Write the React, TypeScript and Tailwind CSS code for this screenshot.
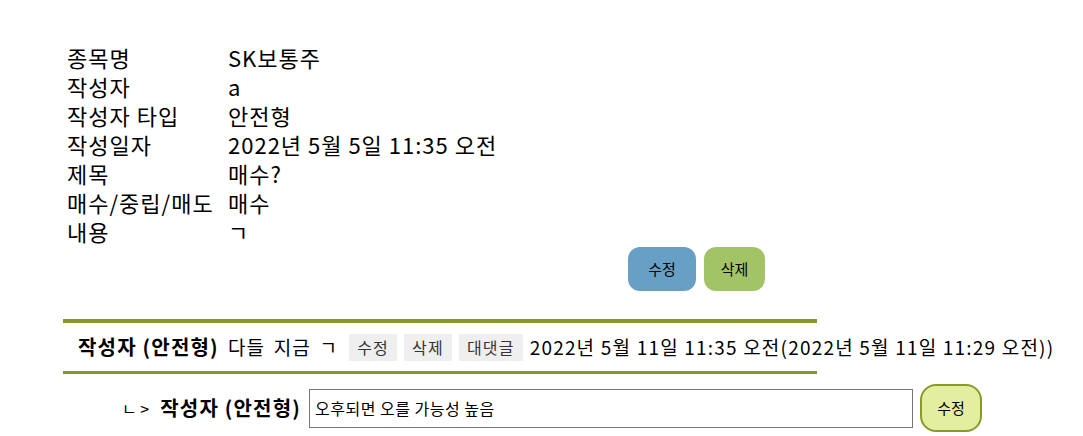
import React from 'react';

const rows: [string, string][] = [
  ['종목명', 'SK보통주'],
  ['작성자', 'a'],
  ['작성자 타입', '안전형'],
  ['작성일자', '2022년 5월 5일 11:35 오전'],
  ['제목', '매수?'],
  ['매수/중립/매도', '매수'],
  ['내용', 'ㄱ'],
];

const App = () => {
  return (
    <div
      className="min-h-[436px] w-[1083px] bg-white text-black"
      style={{ fontFamily: '"Noto Sans CJK KR", "Noto Sans", sans-serif' }}
    >
      {/* 게시글 정보 */}
      <div className="pl-[67px] pt-[43px]">
        <table className="text-[22px] leading-[29px] tracking-[1px]">
          <tbody>
            {rows.map(([label, value]) => (
              <tr key={label}>
                <td className="w-[161px] p-0 whitespace-nowrap">{label}</td>
                <td className="p-0 whitespace-nowrap">{value}</td>
              </tr>
            ))}
          </tbody>
        </table>
      </div>

      <div className="flex w-[765px] justify-end gap-2 pt-[1px]">
        <button className="h-[44px] w-[68px] rounded-xl bg-[#67a0c4] text-[15px]">수정</button>
        <button className="h-[44px] w-[61px] rounded-xl bg-[#a3c466] text-[15px]">삭제</button>
      </div>

      {/* 댓글 */}
      <div className="ml-[63px] mt-[28px] w-[754px] border-t-4 border-b-[3px] border-[#86962a]">
        <div className="flex h-[48px] items-center whitespace-nowrap pl-[15px] text-[19px] tracking-[1.2px]">
          <span className="text-[20px] font-bold">작성자 (안전형)</span>
          <span className="ml-[9px] [word-spacing:3px]">다들 지금 ㄱ</span>
          <span className="ml-[11px] bg-[#efefef] px-[8px] leading-[27px] text-[16px] text-[#333]">수정</span>
          <span className="ml-[7px] bg-[#efefef] px-[8px] leading-[27px] text-[16px] text-[#333]">삭제</span>
          <span className="ml-[7px] bg-[#efefef] px-[8px] leading-[27px] text-[16px] text-[#333]">대댓글</span>
          <span className="ml-[7px]">2022년 5월 11일 11:35 오전(2022년 5월 11일 11:29 오전))</span>
        </div>
      </div>

      {/* 대댓글 수정 */}
      <div className="mt-[10px] flex items-center pl-[122px] whitespace-nowrap">
        <span className="text-[16px]">ㄴ &gt;</span>
        <span className="ml-[11px] text-[20px] font-bold tracking-[1.2px]">작성자 (안전형)</span>
        <input
          className="ml-[8px] h-[39px] w-[604px] border border-[#767676] px-[5px] text-[16px] tracking-[0.5px] outline-none"
          defaultValue="오후되면 오를 가능성 높음"
        />
        <button className="ml-[7px] h-[48px] w-[62px] rounded-2xl border-2 border-[#8a9a2a] bg-[#e3ee9f] text-[15px]">
          수정
        </button>
      </div>
    </div>
  );
};

export default App;
